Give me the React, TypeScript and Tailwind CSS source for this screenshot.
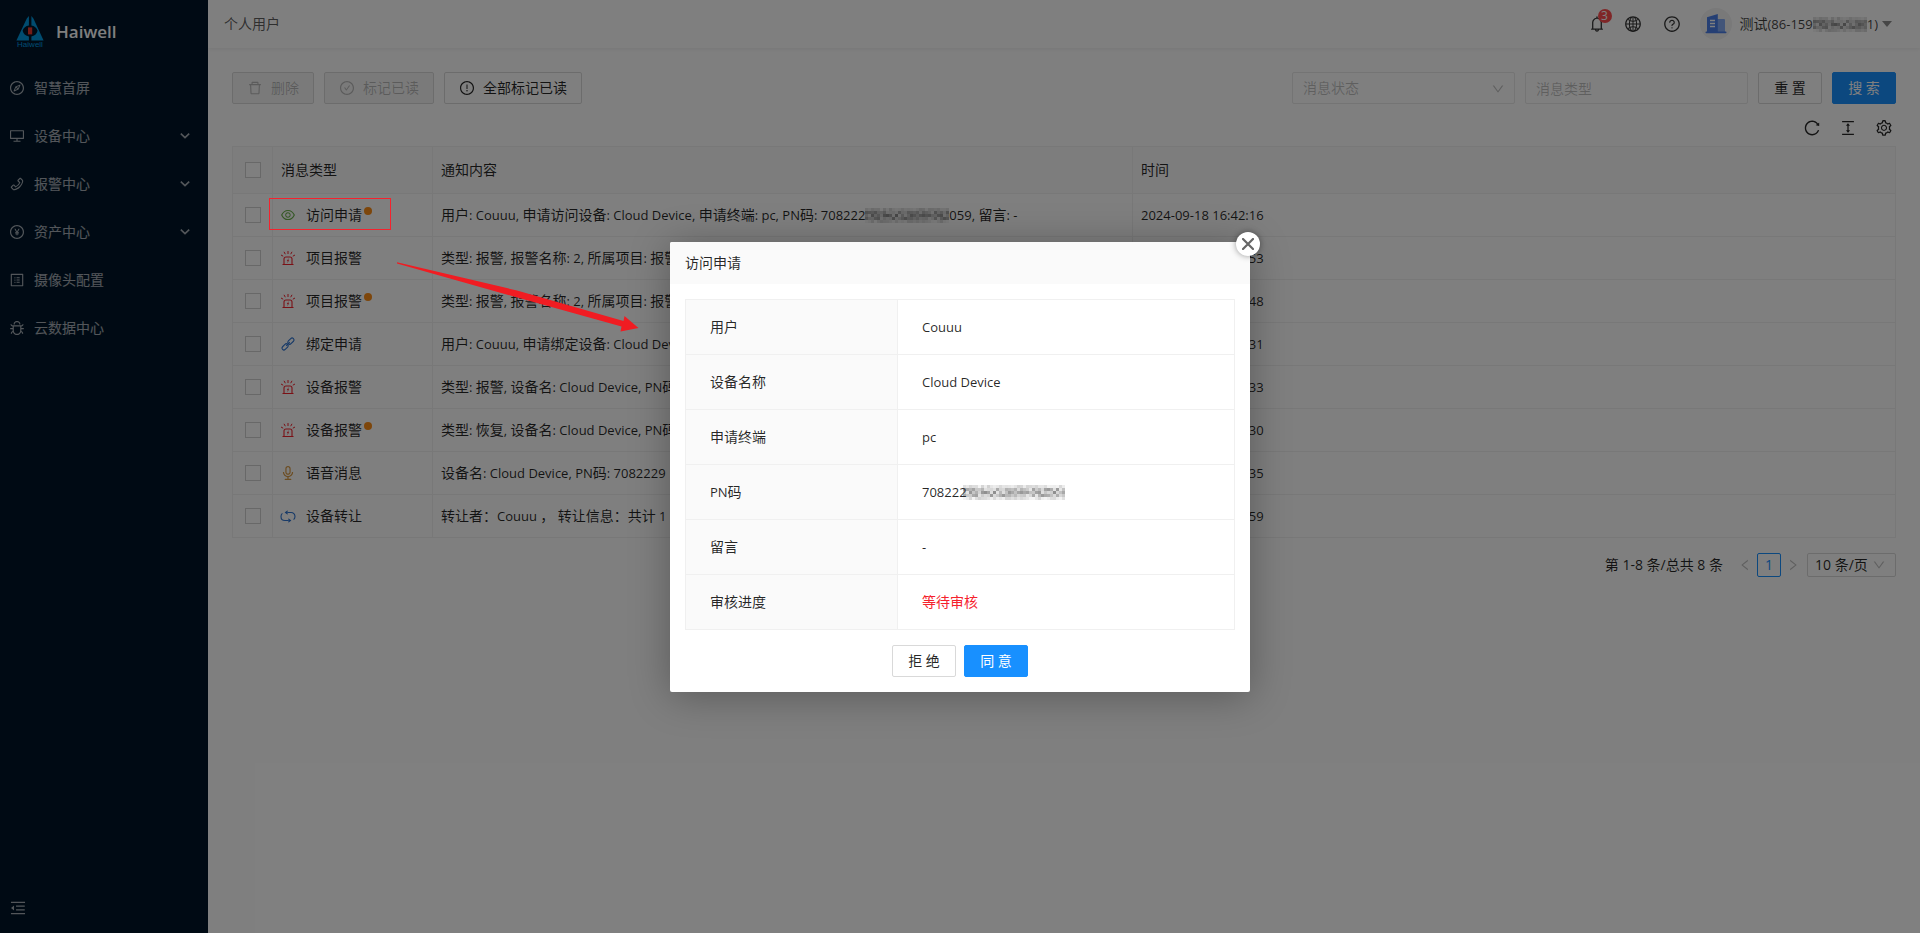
import React from "react";
import {
  AiOutlineAudio,
  AiOutlineBell,
  AiOutlineBug,
  AiOutlineCheckCircle,
  AiOutlineColumnHeight,
  AiOutlineCompass,
  AiOutlineDelete,
  AiOutlineDesktop,
  AiOutlineDown,
  AiOutlineExclamationCircle,
  AiOutlineEye,
  AiOutlineGlobal,
  AiOutlineLeft,
  AiOutlineMenuFold,
  AiOutlinePayCircle,
  AiOutlinePhone,
  AiOutlineProfile,
  AiOutlineQuestionCircle,
  AiOutlineReload,
  AiOutlineRight,
  AiOutlineSetting,
} from "react-icons/ai";

/* Latin runs sit one pixel smaller than the Chinese text around them. */
function Mix({ text }: { text: string }) {
  return (
    <>
      {text.split(/([\x20-\x7e]+)/).map((part, i) =>
        i % 2 ? (
          <span key={i} className="whitespace-pre text-[13px]">
            {part}
          </span>
        ) : (
          part
        ),
      )}
    </>
  );
}

/* Pixel mosaic that hides part of a number. */
const SHADES = [0.4, 0.22, 0.34, 0.5, 0.16, 0.42, 0.28, 0.55, 0.3, 0.46, 0.2, 0.38, 0.14, 0.44, 0.5, 0.3, 0.24];
const ROW_WEIGHT = [0.4, 0.9, 1, 0.9, 0.4];
function Mosaic({ cols, className = "" }: { cols: number; className?: string }) {
  const cells: React.ReactElement[] = [];
  for (let y = 0; y < 5; y++) {
    for (let x = 0; x < cols; x++) {
      cells.push(
        <rect
          key={`${x}-${y}`}
          x={x * 3}
          y={y * 3}
          width="3"
          height="3"
          fill="#333"
          opacity={SHADES[(x * 5 + y * 3 + ((x * x) % 7)) % SHADES.length] * ROW_WEIGHT[y]}
        />,
      );
    }
  }
  return (
    <svg aria-hidden="true" width={cols * 3} height="15" className={`inline-block shrink-0 align-middle ${className}`}>
      {cells}
    </svg>
  );
}

function Logo() {
  return (
    <svg viewBox="0 -1 28 34" className="h-[34px] w-7 shrink-0 overflow-visible" aria-hidden="true">
      <path d="M12.9 0V9.6C9.8 10 7.4 12 6.6 14.8C7.4 18 9.8 20 12.9 20.6V24.4H.4L10.8 2.4Z" fill="#0099e0" />
      <path d="M15.4 0V9.6C18.4 10 20.8 12 21.6 14.8C20.8 18 18.4 20 15.4 20.6V24.4H27.6L17.4 2.4Z" fill="#0099e0" />
      <rect x="12" y="11.4" width="4.2" height="7" fill="#e8382f" />
      <text x="14" y="31" textAnchor="middle" fontSize="8" fontFamily="Liberation Sans, sans-serif" fill="#0099e0">
        Haiwell
      </text>
    </svg>
  );
}

function Siren({ className }: { className?: string }) {
  return (
    <svg viewBox="0 0 16 16" className={className} fill="none" stroke="currentColor" aria-hidden="true">
      <path d="M4 14V9a2 2 0 0 1 2-2h4a2 2 0 0 1 2 2v5M2.5 14.5h11" strokeWidth="1.1" />
      <path d="M8 1v3M4 1.8l1.3 2.4M12 1.8l-1.3 2.4M1 5l2.2 1.2M15 5l-2.2 1.2" />
      <path d="M8.8 8 6.8 11h1l-.6 2.2 2-3h-1z" fill="currentColor" stroke="none" />
    </svg>
  );
}

function Chain({ className }: { className?: string }) {
  return (
    <svg viewBox="0 0 16 16" className={className} fill="none" stroke="currentColor" strokeWidth="1.1" aria-hidden="true">
      <rect x="-3.6" y="-1.9" width="7.2" height="3.8" rx="1.9" transform="translate(10.9 5.1) rotate(-45)" />
      <rect x="-3.6" y="-1.9" width="7.2" height="3.8" rx="1.9" transform="translate(5.1 10.9) rotate(-45)" />
      <path d="m6.2 9.8 3.6-3.6" />
    </svg>
  );
}

function Transfer({ className }: { className?: string }) {
  return (
    <svg viewBox="0 0 16 16" className={className} fill="none" stroke="currentColor" strokeWidth="1.1" aria-hidden="true">
      <path d="M2.4 5.4C1.4 6.2 1 7.2 1 8.4c0 2.4 1.6 4.1 4 4.1h3.6" />
      <path d="M13.6 11.6c1-.8 1.4-1.8 1.4-3 0-2.4-1.600-4.100-4-4.100H7.400" />
      <path d="M4.600 4.500 7.600 2.300v4.400zM11.400 12.500 8.400 10.300v4.400z" fill="currentColor" stroke="none" />
    </svg>
  );
}

function Building() {
  return (
    <svg viewBox="0 0 32 32" className="h-8 w-8" aria-hidden="true">
      <circle cx="16" cy="16" r="16" fill="#f2f2f3" />
      <path d="M17 11h7a1 1 0 0 1 1 1v12h-8z" fill="#85aaf2" />
      <path d="M7 9.2 17.8 6v18.2H7z" fill="#4a7fe8" />
      <rect x="5.5" y="23.6" width="21" height="1.6" rx=".8" fill="#4a7fe8" />
      <path d="M10 12.5h5M10 15.5h5M10 18.5h5" stroke="#fff" strokeWidth="1.3" />
    </svg>
  );
}

const MENU = [
  { label: "智慧首屏", icon: AiOutlineCompass, sub: false },
  { label: "设备中心", icon: AiOutlineDesktop, sub: true },
  { label: "报警中心", icon: AiOutlinePhone, sub: true },
  { label: "资产中心", icon: AiOutlinePayCircle, sub: true },
  { label: "摄像头配置", icon: AiOutlineProfile, sub: false },
  { label: "云数据中心", icon: AiOutlineBug, sub: false },
];

const RED = "text-[#f5222d]";
const BLUE = "text-[#2f74d0]";
const ROWS = [
  { icon: AiOutlineEye, tone: "text-[#6ab04a]", type: "访问申请", unread: true, text: "", time: "2024-09-18 16:42:16" },
  { icon: Siren, tone: RED, type: "项目报警", unread: false, text: "类型: 报警, 报警名称: 2, 所属项目: 报警", time: "2024-09-18 16:40:53" },
  { icon: Siren, tone: RED, type: "项目报警", unread: true, text: "类型: 报警, 报警名称: 2, 所属项目: 报警", time: "2024-09-18 16:40:48" },
  { icon: Chain, tone: BLUE, type: "绑定申请", unread: false, text: "用户: Couuu, 申请绑定设备: Cloud Device", time: "2024-09-18 16:39:31" },
  { icon: Siren, tone: RED, type: "设备报警", unread: false, text: "类型: 报警, 设备名: Cloud Device, PN码", time: "2024-09-18 16:38:33" },
  { icon: Siren, tone: RED, type: "设备报警", unread: true, text: "类型: 恢复, 设备名: Cloud Device, PN码", time: "2024-09-18 16:38:30" },
  { icon: AiOutlineAudio, tone: "text-[#d99a45]", type: "语音消息", unread: false, text: "设备名: Cloud Device, PN码: 7082229", time: "2024-09-18 16:36:35" },
  { icon: Transfer, tone: BLUE, type: "设备转让", unread: false, text: "转让者：Couuu ， 转让信息：共计 1 个", time: "2024-09-18 16:35:59" },
];

const DETAILS = [
  { label: "用户", value: "Couuu" },
  { label: "设备名称", value: "Cloud Device" },
  { label: "申请终端", value: "pc" },
  { label: "PN码", value: "708222" },
  { label: "留言", value: "-" },
  { label: "审核进度", value: "等待审核" },
];

const CHECKBOX = "block h-4 w-4 appearance-none border border-[#d0d0d0] bg-white";
const BUTTON = "flex h-8 items-center justify-center rounded-xs border";

function Sidebar() {
  return (
    <aside className="flex w-52 shrink-0 flex-col bg-[#001529] text-white/65">
      <div className="flex h-16 items-center gap-3 px-4">
        <Logo />
        <h1 className="text-[17px] font-semibold text-white">Haiwell</h1>
      </div>
      <nav className="flex-1">
        {MENU.map(({ label, icon: Icon, sub }) => (
          <a key={label} href="#" className="flex h-12 items-center gap-[9px] pr-4 pl-[9px]">
            <Icon className="h-4 w-4" />
            <span className="flex-1">{label}</span>
            {sub && (
              <svg viewBox="0 0 14 14" className="h-3.5 w-3.5" fill="none" stroke="currentColor" strokeWidth="1.6" aria-hidden="true">
                <path d="m2.8 4.6 4.2 4 4.2-4" />
              </svg>
            )}
          </a>
        ))}
      </nav>
      <button aria-label="收起菜单" className="flex h-[50px] items-center px-[9px]">
        <AiOutlineMenuFold className="h-[18px] w-[18px]" />
      </button>
    </aside>
  );
}

function Header() {
  return (
    <header className="flex h-12 items-center justify-between bg-white pr-7 pl-4 text-black/65 shadow-[0_1px_4px_rgba(0,21,41,0.08)]">
      <span>个人用户</span>
      <div className="flex items-center">
        <div className="flex items-center gap-[21px] pr-[19px] text-black/80">
          <button aria-label="消息" className="relative -mr-[3px]">
            <AiOutlineBell className="h-[18px] w-[18px]" />
            <span className="absolute -top-1.5 left-2.5 flex h-3.5 w-3.5 items-center justify-center rounded-full bg-[#ff4d4f] text-xs leading-none text-white">
              3
            </span>
          </button>
          <button aria-label="语言">
            <AiOutlineGlobal className="h-[18px] w-[18px]" />
          </button>
          <button aria-label="帮助">
            <AiOutlineQuestionCircle className="h-[18px] w-[18px]" />
          </button>
        </div>
        <button className="flex items-center">
          <Building />
          <span className="flex items-center pl-2 text-black/75">
            <span>
              <Mix text="测试(86-159" />
            </span>
            <Mosaic cols={18} />
            <Mix text="1)" />
          </span>
          <svg viewBox="0 0 10 6" className="ml-1 h-1.5 w-2.5 text-black/45" fill="currentColor" aria-hidden="true">
            <path d="M0 0h10L5 6z" />
          </svg>
        </button>
      </div>
    </header>
  );
}

function Toolbar() {
  return (
    <div className="flex items-center justify-between">
      <div className="flex gap-2.5">
        <button disabled className={`${BUTTON} gap-2 border-[#d9d9d9] bg-[#f5f5f5] px-3.5 text-black/25`}>
          <AiOutlineDelete className="h-4 w-4" />
          删除
        </button>
        <button disabled className={`${BUTTON} gap-2 border-[#d9d9d9] bg-[#f5f5f5] px-3.5 text-black/25`}>
          <AiOutlineCheckCircle className="h-4 w-4" />
          标记已读
        </button>
        <button className={`${BUTTON} gap-2 border-[#d9d9d9] bg-white px-3.5`}>
          <AiOutlineExclamationCircle className="h-4 w-4" />
          全部标记已读
        </button>
      </div>
      <form className="flex gap-2.5" onSubmit={(e) => e.preventDefault()}>
        <div className="relative w-[223px]">
          <select aria-label="消息状态" className="h-8 w-full appearance-none rounded-xs border border-[#e8e8e8] bg-white px-2.5 text-black/25">
            <option>消息状态</option>
          </select>
          <AiOutlineDown className="pointer-events-none absolute top-2.5 right-2.5 h-3.5 w-3.5 text-black/25" />
        </div>
        <input aria-label="消息类型" placeholder="消息类型" className="h-8 w-[223px] rounded-xs border border-[#e8e8e8] bg-white px-2.5 placeholder:text-black/25" />
        <button type="reset" className={`${BUTTON} w-16 border-[#d9d9d9] bg-white`}>重 置</button>
        <button type="submit" className={`${BUTTON} w-16 border-[#1890ff] bg-[#1890ff] text-white`}>搜 索</button>
      </form>
    </div>
  );
}

function MessageTable() {
  return (
    <table className="w-full table-fixed border-collapse border border-[#f0f0f0] text-left">
      <colgroup>
        <col className="w-10" />
        <col className="w-40" />
        <col className="w-[700px]" />
        <col />
      </colgroup>
      <thead>
        <tr className="h-[47px] bg-[#fafafa]">
          <th className="border border-[#f0f0f0] px-3">
            <input type="checkbox" aria-label="全选" className={CHECKBOX} />
          </th>
          <th className="border border-[#f0f0f0] px-2 font-normal">消息类型</th>
          <th className="border border-[#f0f0f0] px-2 font-normal">通知内容</th>
          <th className="border border-[#f0f0f0] px-2 font-normal">时间</th>
        </tr>
      </thead>
      <tbody>
        {ROWS.map(({ icon: Icon, tone, type, unread, text, time }, i) => (
          <tr key={i} className="h-[43px]">
            <td className="border border-[#f0f0f0] px-3">
              <input type="checkbox" aria-label={`${type} ${time}`} className={CHECKBOX} />
            </td>
            <td className="border border-[#f0f0f0] px-[7px]">
              <div className="flex items-center">
                <Icon className={`mr-2.5 h-4 w-4 ${tone}`} />
                {type}
                {unread && <span className="mb-2 ml-0.5 h-2 w-2 rounded-full bg-[#fa8c16]" />}
              </div>
            </td>
            <td className="border border-[#f0f0f0] px-2 whitespace-nowrap">
              {i === 0 ? (
                <div className="flex items-center">
                  <span>
                    <Mix text="用户: Couuu, 申请访问设备: Cloud Device, 申请终端: pc, PN码: 708222" />
                  </span>
                  <Mosaic cols={28} />
                  <span>
                    <Mix text="059, 留言: -" />
                  </span>
                </div>
              ) : (
                <Mix text={text} />
              )}
            </td>
            <td className="border border-[#f0f0f0] px-2">
              <Mix text={time} />
            </td>
          </tr>
        ))}
      </tbody>
    </table>
  );
}

function Pagination() {
  return (
    <div className="mt-[15px] flex h-6 items-center justify-end">
      <span className="mr-2.5">第 1-8 条/总共 8 条</span>
      <button aria-label="上一页" className="flex w-6 items-center justify-center text-black/25">
        <AiOutlineLeft className="h-3.5 w-3.5" />
      </button>
      <button className="flex h-6 w-6 items-center justify-center rounded-xs border border-[#1890ff] text-[#1890ff]">1</button>
      <button aria-label="下一页" className="flex w-6 items-center justify-center text-black/25">
        <AiOutlineRight className="h-3.5 w-3.5" />
      </button>
      <div className="relative ml-0.5 w-[89px]">
        <select aria-label="每页条数" className="block h-6 w-full appearance-none rounded-xs border border-[#d9d9d9] bg-white px-[7px]">
          <option>10 条/页</option>
        </select>
        <AiOutlineDown className="pointer-events-none absolute top-[5px] right-2.5 h-3.5 w-3.5 text-black/25" />
      </div>
    </div>
  );
}

function RequestDialog() {
  return (
    <div role="dialog" aria-modal="true" aria-label="访问申请" className="relative w-[580px] rounded-xs bg-white text-black/85 shadow-[0_4px_40px_rgba(0,0,0,0.3)]">
      <h2 className="flex h-[42px] items-center rounded-t-xs bg-[#fafafa] px-[15px]">访问申请</h2>
      <button aria-label="关闭" className="absolute -top-2.5 -right-2.5 flex h-6 w-6 items-center justify-center rounded-full bg-white text-[#666] shadow-[0_0_6px_rgba(0,0,0,0.4)]">
        <svg viewBox="0 0 12 12" className="h-3 w-3" stroke="currentColor" strokeWidth="2.2" strokeLinecap="round" aria-hidden="true">
          <path d="m1 1 10 10M11 1 1 11" />
        </svg>
      </button>
      <div className="flex flex-col gap-[15px] p-[15px]">
        <table className="w-full table-fixed border-collapse border border-[#f0f0f0] text-left">
          <colgroup>
            <col className="w-[212px]" />
            <col />
          </colgroup>
          <tbody>
            {DETAILS.map(({ label, value }) => (
              <tr key={label} className="h-[55px] border-b border-[#f0f0f0]">
                <th className="border-r border-[#f0f0f0] bg-[#fafafa] px-6 font-normal">
                  <Mix text={label} />
                </th>
                <td className={label === "审核进度" ? "px-6 text-[#f5222d]" : "px-6"}>
                  <Mix text={value} />
                  {label === "PN码" && <Mosaic cols={34} className="-ml-1" />}
                </td>
              </tr>
            ))}
          </tbody>
        </table>
        <div className="flex justify-center gap-2">
          <button className={`${BUTTON} w-16 border-[#d9d9d9] bg-white`}>拒 绝</button>
          <button className={`${BUTTON} w-16 border-[#1890ff] bg-[#1890ff] text-white`}>同 意</button>
        </div>
      </div>
    </div>
  );
}

export default function App() {
  return (
    <div className="relative flex min-h-screen font-['Open_Sans','Noto_Sans_CJK_SC',sans-serif] text-sm text-black/85">
      <Sidebar />
      <div className="flex min-w-0 flex-1 flex-col bg-white">
        <Header />
        <main className="flex flex-col p-6">
          <Toolbar />
          <div className="flex h-[42px] items-center justify-end gap-[18px] pt-1.5 pr-[3px]">
            <button aria-label="刷新"><AiOutlineReload className="h-[18px] w-[18px]" /></button>
            <button aria-label="密度"><AiOutlineColumnHeight className="h-[18px] w-[18px]" /></button>
            <button aria-label="列设置"><AiOutlineSetting className="h-[18px] w-[18px]" /></button>
          </div>
          <MessageTable />
          <Pagination />
        </main>
      </div>
      <div className="absolute inset-0 flex items-center justify-center bg-black/50">
        <RequestDialog />
      </div>
      <div className="pointer-events-none absolute top-[198px] left-[269px] h-8 w-[122px] border border-[#f5222d]" />
      <svg viewBox="0 0 242 70" className="pointer-events-none absolute top-[262px] left-[397px] h-[70px] w-[242px]" aria-hidden="true">
        <path d="M0 .2 120 28.5 226.5 59 227.5 54 241.5 66 223.5 69.5 224.5 64.5 115 34 0 1.4z" fill="#f01c22" />
      </svg>
    </div>
  );
}
